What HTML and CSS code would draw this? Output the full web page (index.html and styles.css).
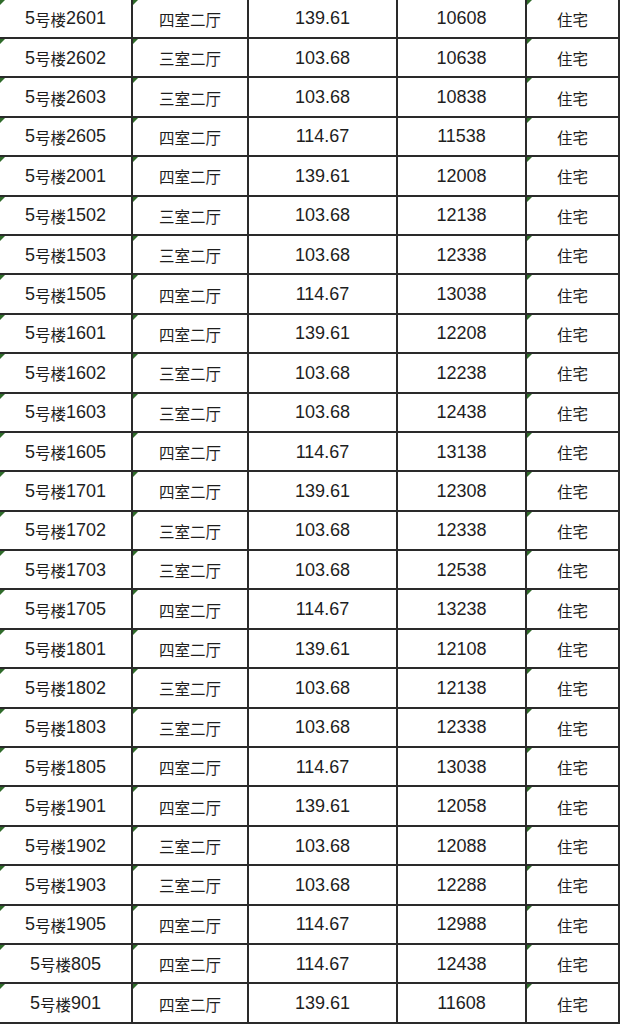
FILE: index.html
```html
<!DOCTYPE html>
<html lang="zh">
<head>
<meta charset="utf-8">
<title>5号楼房源价目表</title>
<link rel="stylesheet" href="styles.css">
</head>
<body>
<div class="sheet">
<div class="c t">5<span class="cn">号楼</span>2601</div><div class="c t"><span class="cn">四室二厅</span></div><div class="c">139.61</div><div class="c">10608</div><div class="c t"><span class="cn">住宅</span></div>
<div class="c t">5<span class="cn">号楼</span>2602</div><div class="c t"><span class="cn">三室二厅</span></div><div class="c">103.68</div><div class="c">10638</div><div class="c t"><span class="cn">住宅</span></div>
<div class="c t">5<span class="cn">号楼</span>2603</div><div class="c t"><span class="cn">三室二厅</span></div><div class="c">103.68</div><div class="c">10838</div><div class="c t"><span class="cn">住宅</span></div>
<div class="c t">5<span class="cn">号楼</span>2605</div><div class="c t"><span class="cn">四室二厅</span></div><div class="c">114.67</div><div class="c">11538</div><div class="c t"><span class="cn">住宅</span></div>
<div class="c t">5<span class="cn">号楼</span>2001</div><div class="c t"><span class="cn">四室二厅</span></div><div class="c">139.61</div><div class="c">12008</div><div class="c t"><span class="cn">住宅</span></div>
<div class="c t">5<span class="cn">号楼</span>1502</div><div class="c t"><span class="cn">三室二厅</span></div><div class="c">103.68</div><div class="c">12138</div><div class="c t"><span class="cn">住宅</span></div>
<div class="c t">5<span class="cn">号楼</span>1503</div><div class="c t"><span class="cn">三室二厅</span></div><div class="c">103.68</div><div class="c">12338</div><div class="c t"><span class="cn">住宅</span></div>
<div class="c t">5<span class="cn">号楼</span>1505</div><div class="c t"><span class="cn">四室二厅</span></div><div class="c">114.67</div><div class="c">13038</div><div class="c t"><span class="cn">住宅</span></div>
<div class="c t">5<span class="cn">号楼</span>1601</div><div class="c t"><span class="cn">四室二厅</span></div><div class="c">139.61</div><div class="c">12208</div><div class="c t"><span class="cn">住宅</span></div>
<div class="c t">5<span class="cn">号楼</span>1602</div><div class="c t"><span class="cn">三室二厅</span></div><div class="c">103.68</div><div class="c">12238</div><div class="c t"><span class="cn">住宅</span></div>
<div class="c t">5<span class="cn">号楼</span>1603</div><div class="c t"><span class="cn">三室二厅</span></div><div class="c">103.68</div><div class="c">12438</div><div class="c t"><span class="cn">住宅</span></div>
<div class="c t">5<span class="cn">号楼</span>1605</div><div class="c t"><span class="cn">四室二厅</span></div><div class="c">114.67</div><div class="c">13138</div><div class="c t"><span class="cn">住宅</span></div>
<div class="c t">5<span class="cn">号楼</span>1701</div><div class="c t"><span class="cn">四室二厅</span></div><div class="c">139.61</div><div class="c">12308</div><div class="c t"><span class="cn">住宅</span></div>
<div class="c t">5<span class="cn">号楼</span>1702</div><div class="c t"><span class="cn">三室二厅</span></div><div class="c">103.68</div><div class="c">12338</div><div class="c t"><span class="cn">住宅</span></div>
<div class="c t">5<span class="cn">号楼</span>1703</div><div class="c t"><span class="cn">三室二厅</span></div><div class="c">103.68</div><div class="c">12538</div><div class="c t"><span class="cn">住宅</span></div>
<div class="c t">5<span class="cn">号楼</span>1705</div><div class="c t"><span class="cn">四室二厅</span></div><div class="c">114.67</div><div class="c">13238</div><div class="c t"><span class="cn">住宅</span></div>
<div class="c t">5<span class="cn">号楼</span>1801</div><div class="c t"><span class="cn">四室二厅</span></div><div class="c">139.61</div><div class="c">12108</div><div class="c t"><span class="cn">住宅</span></div>
<div class="c t">5<span class="cn">号楼</span>1802</div><div class="c t"><span class="cn">三室二厅</span></div><div class="c">103.68</div><div class="c">12138</div><div class="c t"><span class="cn">住宅</span></div>
<div class="c t">5<span class="cn">号楼</span>1803</div><div class="c t"><span class="cn">三室二厅</span></div><div class="c">103.68</div><div class="c">12338</div><div class="c t"><span class="cn">住宅</span></div>
<div class="c t">5<span class="cn">号楼</span>1805</div><div class="c t"><span class="cn">四室二厅</span></div><div class="c">114.67</div><div class="c">13038</div><div class="c t"><span class="cn">住宅</span></div>
<div class="c t">5<span class="cn">号楼</span>1901</div><div class="c t"><span class="cn">四室二厅</span></div><div class="c">139.61</div><div class="c">12058</div><div class="c t"><span class="cn">住宅</span></div>
<div class="c t">5<span class="cn">号楼</span>1902</div><div class="c t"><span class="cn">三室二厅</span></div><div class="c">103.68</div><div class="c">12088</div><div class="c t"><span class="cn">住宅</span></div>
<div class="c t">5<span class="cn">号楼</span>1903</div><div class="c t"><span class="cn">三室二厅</span></div><div class="c">103.68</div><div class="c">12288</div><div class="c t"><span class="cn">住宅</span></div>
<div class="c t">5<span class="cn">号楼</span>1905</div><div class="c t"><span class="cn">四室二厅</span></div><div class="c">114.67</div><div class="c">12988</div><div class="c t"><span class="cn">住宅</span></div>
<div class="c t">5<span class="cn">号楼</span>805</div><div class="c t"><span class="cn">四室二厅</span></div><div class="c">114.67</div><div class="c">12438</div><div class="c t"><span class="cn">住宅</span></div>
<div class="c t">5<span class="cn">号楼</span>901</div><div class="c t"><span class="cn">四室二厅</span></div><div class="c">139.61</div><div class="c">11608</div><div class="c t"><span class="cn">住宅</span></div>
</div>
</body>
</html>
```

FILE: styles.css
```css
html, body {
  margin: 0;
  padding: 0;
  background: #ffffff;
  overflow: hidden;
}

.sheet {
  display: grid;
  grid-template-columns: 133px 116px 149px 129px 93px;
  grid-auto-rows: 39.4px;
  margin-top: -0.4px;
  width: 620px;
  font-family: "Liberation Sans", "Noto Sans CJK SC", sans-serif;
  font-size: 18px;
  color: #1e1e1e;
}

.c {
  position: relative;
  display: flex;
  align-items: center;
  justify-content: center;
  border-right: 2px solid #2a2a2a;
  border-bottom: 2px solid #2a2a2a;
  white-space: nowrap;
  padding-top: 1px;
}

.cn {
  font-family: "Noto Sans CJK SC", sans-serif;
  font-size: 15.5px;
}

.t::before {
  content: "";
  position: absolute;
  top: 0;
  left: 0;
  width: 0;
  height: 0;
  border-top: 5px solid #2f6b2a;
  border-right: 5px solid transparent;
}
```
